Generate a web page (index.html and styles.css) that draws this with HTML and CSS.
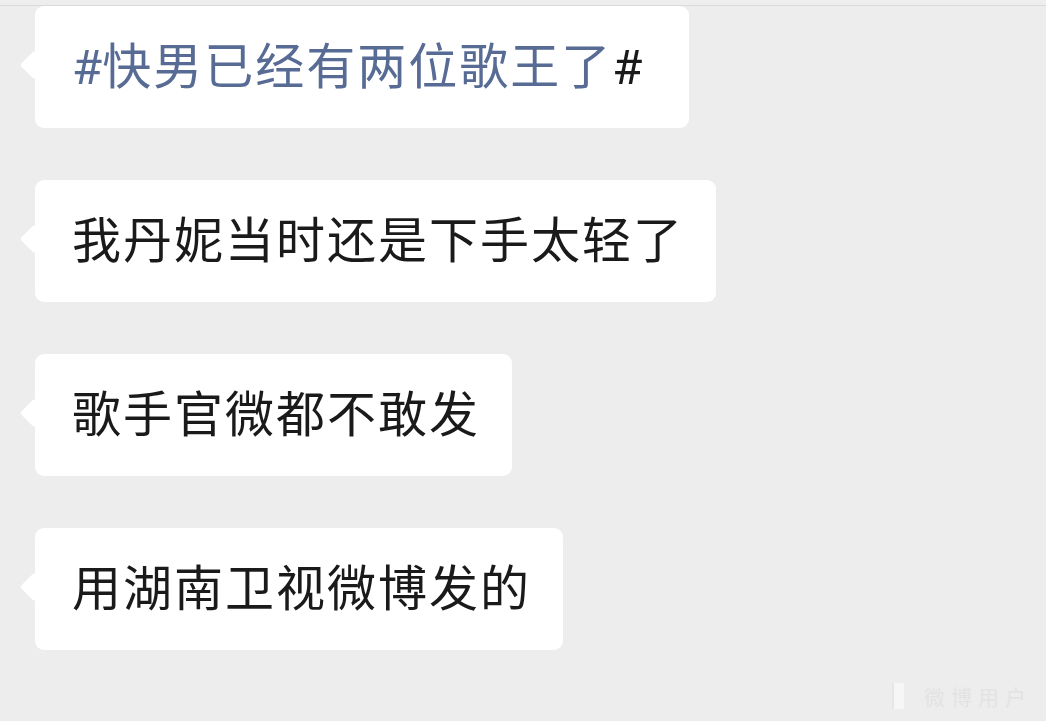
FILE: index.html
```html
<!DOCTYPE html>
<html lang="zh-CN">
<head>
<meta charset="utf-8">
<title>聊天记录</title>
<link rel="stylesheet" href="styles.css">
</head>
<body>
<div class="topbar"></div>
<div class="chat">
  <div class="bubble"><span class="link"><span class="hash">#</span>快男已经有两位歌王了</span><span class="hash">#</span>&nbsp;</div>
  <div class="bubble">我丹妮当时还是下手太轻了</div>
  <div class="bubble">歌手官微都不敢发</div>
  <div class="bubble">用湖南卫视微博发的</div>
</div>
<div class="watermark"><span class="wm-bar"></span><span class="wm-text">微博用户</span></div>
</body>
</html>
```
FILE: styles.css
```css
html, body {
  margin: 0;
  padding: 0;
}
body {
  background: #ededed;
  width: 1046px;
  height: 721px;
  overflow: hidden;
  position: relative;
  font-family: "Roboto", "Noto Sans CJK SC", sans-serif;
}
.topbar {
  height: 5px;
  background: #eeeeee;
  border-bottom: 1px solid #dadada;
}
.chat {
  display: flex;
  flex-direction: column;
  align-items: flex-start;
  gap: 52px;
  padding-left: 35px;
}
.bubble {
  position: relative;
  height: 122px;
  box-sizing: border-box;
  display: flex;
  align-items: center;
  padding: 0 32px 0 37px;
  background: #ffffff;
  border-radius: 9px;
  font-size: 49px;
  letter-spacing: 2px;
  line-height: 1;
  color: #1a1a1a;
  white-space: nowrap;
}
.bubble::before {
  content: "";
  position: absolute;
  left: -11px;
  top: 50%;
  width: 20px;
  height: 20px;
  margin-top: -12px;
  background: #ffffff;
  border-radius: 2px;
  transform: rotate(45deg);
}
.link {
  color: #576b95;
}
.hash {
  font-family: "Roboto", sans-serif;
  letter-spacing: 0;
}
.watermark {
  position: absolute;
  right: 14px;
  bottom: 12px;
  display: flex;
  align-items: flex-end;
  gap: 20px;
}
.wm-bar {
  width: 10px;
  height: 26px;
  background: #f6f6f6;
  border-left: 2px solid #e6e6e6;
}
.wm-text {
  font-size: 21px;
  line-height: 22px;
  color: #e3e3e3;
  letter-spacing: 6px;
}
```
